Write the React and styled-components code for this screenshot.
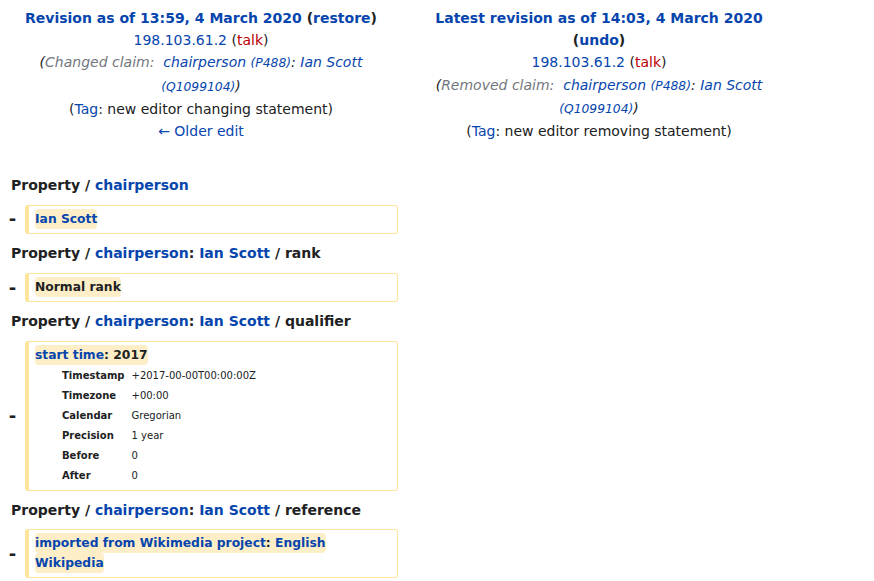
import React from "react";
import styled, { createGlobalStyle } from "styled-components";

const GlobalStyle = createGlobalStyle`
  html, body {
    margin: 0;
    padding: 0;
    background: #fff;
  }
  body {
    font-family: "DejaVu Sans", sans-serif;
    font-size: 14px;
    line-height: 1.6;
    color: #202122;
  }
`;

const Page = styled.div`
  width: 800px;
  padding: 7px 4px 0 4px;
  box-sizing: border-box;
`;

const Header = styled.div`
  display: grid;
  grid-template-columns: 394px 394px;
  column-gap: 4px;
  line-height: 22.2px;
`;

const Title = styled.div`
  text-align: center;
  padding: 0 6px;
`;

const Line = styled.div`
  font-weight: ${(p) => (p.bold ? "bold" : "normal")};
  font-style: ${(p) => (p.italic ? "italic" : "normal")};
`;

const Link = styled.a`
  color: ${(p) => (p.red ? "#ba0000" : "#0645ad")};
  text-decoration: none;
`;

const Muted = styled.span`
  color: #72777d;
`;

const SmallId = styled.span`
  font-size: 0.88em;
`;

const Diff = styled.div`
  margin-top: 32px;
  display: grid;
  grid-template-columns: 17px 373px;
  column-gap: 4px;
  row-gap: 8px;
`;

const LineNo = styled.div`
  grid-column: 1 / span 2;
  font-weight: bold;
  padding-left: 7px;
  line-height: 22.4px;
  color: #202122;
`;

const Marker = styled.div`
  display: flex;
  align-items: center;
  justify-content: center;
  font-weight: bold;
  font-size: 18px;
  line-height: 1;
`;

const Box = styled.div`
  border: 1px solid #ffe49c;
  border-left-width: 4px;
  border-radius: 3px;
  padding: 4px 6px;
  font-size: 12.32px;
  line-height: 1.6;
  color: #202122;
`;

const Change = styled.span`
  background: #feeec8;
  border-radius: 0.33em;
  padding: 0.25em 0;
  font-weight: bold;
  box-decoration-break: clone;
  -webkit-box-decoration-break: clone;
`;

const Details = styled.div`
  display: grid;
  grid-template-columns: max-content 1fr;
  column-gap: 7px;
  margin-left: 27px;
  font-size: 10px;
  line-height: 20px;
`;

const Key = styled.div`
  font-weight: bold;
`;

const Value = styled.div``;

const details = [
  ["Timestamp", "+2017-00-00T00:00:00Z"],
  ["Timezone", "+00:00"],
  ["Calendar", "Gregorian"],
  ["Precision", "1 year"],
  ["Before", "0"],
  ["After", "0"],
];

export default function App() {
  return (
    <Page>
      <GlobalStyle />
      <Header>
        <Title>
          <Line bold>
            <Link>Revision as of 13:59, 4 March 2020</Link> (<Link>restore</Link>)
          </Line>
          <Line>
            <Link>198.103.61.2</Link> (<Link red>talk</Link>)
          </Line>
          <Line italic>
            (<Muted>Changed claim:&nbsp; </Muted>
            <Link>
              chairperson <SmallId>(P488)</SmallId>
            </Link>
            : <Link>
              Ian Scott <SmallId>(Q1099104)</SmallId>
            </Link>
            )
          </Line>
          <Line>
            (<Link>Tag</Link>: new editor changing statement)
          </Line>
          <Line>
            <Link>← Older edit</Link>
          </Line>
        </Title>
        <Title>
          <Line bold>
            <Link>Latest revision as of 14:03, 4 March 2020</Link> (<Link>undo</Link>)
          </Line>
          <Line>
            <Link>198.103.61.2</Link> (<Link red>talk</Link>)
          </Line>
          <Line italic>
            (<Muted>Removed claim:&nbsp; </Muted>
            <Link>
              chairperson <SmallId>(P488)</SmallId>
            </Link>
            : <Link>
              Ian Scott <SmallId>(Q1099104)</SmallId>
            </Link>
            )
          </Line>
          <Line>
            (<Link>Tag</Link>: new editor removing statement)
          </Line>
        </Title>
      </Header>

      <Diff>
        <LineNo>
          Property / <Link>chairperson</Link>
        </LineNo>
        <Marker>-</Marker>
        <Box>
          <Change>
            <Link>Ian Scott</Link>
          </Change>
        </Box>

        <LineNo>
          Property / <Link>chairperson</Link>: <Link>Ian Scott</Link> / rank
        </LineNo>
        <Marker>-</Marker>
        <Box>
          <Change>Normal rank</Change>
        </Box>

        <LineNo>
          Property / <Link>chairperson</Link>: <Link>Ian Scott</Link> / qualifier
        </LineNo>
        <Marker>-</Marker>
        <Box>
          <div>
            <Change>
              <Link>start time</Link>: 2017
            </Change>
          </div>
          <Details>
            {details.map(([k, v]) => (
              <React.Fragment key={k}>
                <Key>{k}</Key>
                <Value>{v}</Value>
              </React.Fragment>
            ))}
          </Details>
        </Box>

        <LineNo>
          Property / <Link>chairperson</Link>: <Link>Ian Scott</Link> / reference
        </LineNo>
        <Marker>-</Marker>
        <Box>
          <Change>
            <Link>imported from Wikimedia project</Link>:{" "}
            <Link>English Wikipedia</Link>
          </Change>
        </Box>
      </Diff>
    </Page>
  );
}
